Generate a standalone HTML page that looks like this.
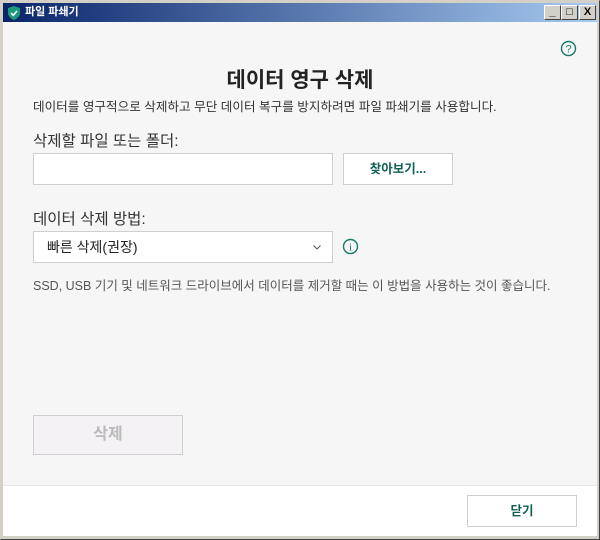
<!DOCTYPE html>
<html><head><meta charset="utf-8"><style>
*{margin:0;padding:0;box-sizing:border-box}
body{width:600px;height:540px;background:#d4d0c8;font-family:"Liberation Sans","Noto Sans CJK KR",sans-serif;position:relative;overflow:hidden}
.win{position:absolute;left:0;top:0;width:600px;height:540px;border:1px solid #d4d0c8;border-right-color:#404040;border-bottom-color:#404040}
.title{position:absolute;left:3px;top:3px;width:594px;height:19px;background:linear-gradient(90deg,#0a246a,#a6caf0);color:#fff;font-size:11px;font-weight:bold;line-height:19px;padding-left:22px}
.tb{position:absolute;top:2px;width:17px;height:15px;background:#d4d0c8;border:1px solid;border-color:#fff #404040 #404040 #fff;font-size:11px;color:#000;text-align:center;line-height:13px;font-weight:bold}
.main{position:absolute;left:3px;top:22px;width:594px;height:463px;background:#f6f6f6}
.foot{position:absolute;left:3px;top:485px;width:594px;height:51px;background:#fff;border-top:1px solid #e6e6e6}
.t{position:absolute;white-space:nowrap;color:#333}
.box{position:absolute;background:#fff;border:1px solid #cfcfcf}
</style></head><body>
<div class="win"></div>
<div class="title">
<svg style="position:absolute;left:5px;top:3px" width="12" height="14" viewBox="0 0 12 14"><path d="M6 0L12 2V7C12 10 9 13 6 14C3 13 0 10 0 7V2Z" fill="#1a9a78"/><path d="M3 7L5.3 9.3L9 5" stroke="#fff" stroke-width="1.6" fill="none"/></svg>
파일 파쇄기
<div class="tb" style="left:541px">_</div><div class="tb" style="left:558px">□</div><div class="tb" style="left:576px">X</div>
</div>
<div class="main"></div>
<div class="foot"></div>
<svg style="position:absolute;left:560px;top:40px" width="17" height="17" viewBox="0 0 17 17"><circle cx="8.5" cy="8.5" r="7" fill="none" stroke="#1a7a6a" stroke-width="1.4"/><text x="8.5" y="12.5" font-size="11" text-anchor="middle" fill="#1a7a6a" font-family="Liberation Sans">?</text></svg>
<div class="t" style="left:0;width:600px;text-align:center;top:64px;font-size:21px;font-weight:bold;color:#222">데이터 영구 삭제</div>
<div class="t" style="left:33px;top:96px;font-size:12.6px">데이터를 영구적으로 삭제하고 무단 데이터 복구를 방지하려면 파일 파쇄기를 사용합니다.</div>
<div class="t" style="left:33px;top:129px;font-size:15.5px">삭제할 파일 또는 폴더:</div>
<div class="box" style="left:33px;top:153px;width:300px;height:32px"></div>
<div class="box" style="left:343px;top:153px;width:110px;height:32px;text-align:center;line-height:30px;font-size:12.5px;font-weight:bold;color:#0f5f55">찾아보기...</div>
<div class="t" style="left:33px;top:207px;font-size:15.5px">데이터 삭제 방법:</div>
<div class="box" style="left:33px;top:231px;width:300px;height:32px;font-size:14px;line-height:30px;padding-left:13px;color:#222">빠른 삭제(권장)<svg style="position:absolute;right:11px;top:13px" width="8" height="5" viewBox="0 0 8 5"><path d="M0.5 0.5L4 4L7.5 0.5" stroke="#555" fill="none"/></svg></div>
<svg style="position:absolute;left:342px;top:238px" width="17" height="17" viewBox="0 0 17 17"><circle cx="8.5" cy="8.5" r="7" fill="none" stroke="#1a7a6a" stroke-width="1.4"/><text x="8.5" y="12.5" font-size="11" text-anchor="middle" fill="#1a7a6a" font-family="Liberation Serif">i</text></svg>
<div class="t" style="left:33px;top:275px;font-size:12.5px;color:#555">SSD, USB 기기 및 네트워크 드라이브에서 데이터를 제거할 때는 이 방법을 사용하는 것이 좋습니다.</div>
<div class="box" style="left:33px;top:415px;width:150px;height:40px;background:#f4f2f4;text-align:center;line-height:38px;font-size:16px;font-weight:bold;color:#bbb">삭제</div>
<div class="box" style="left:467px;top:495px;width:110px;height:32px;text-align:center;line-height:30px;font-size:12.5px;font-weight:bold;color:#0f5f55">닫기</div>
</body></html>
